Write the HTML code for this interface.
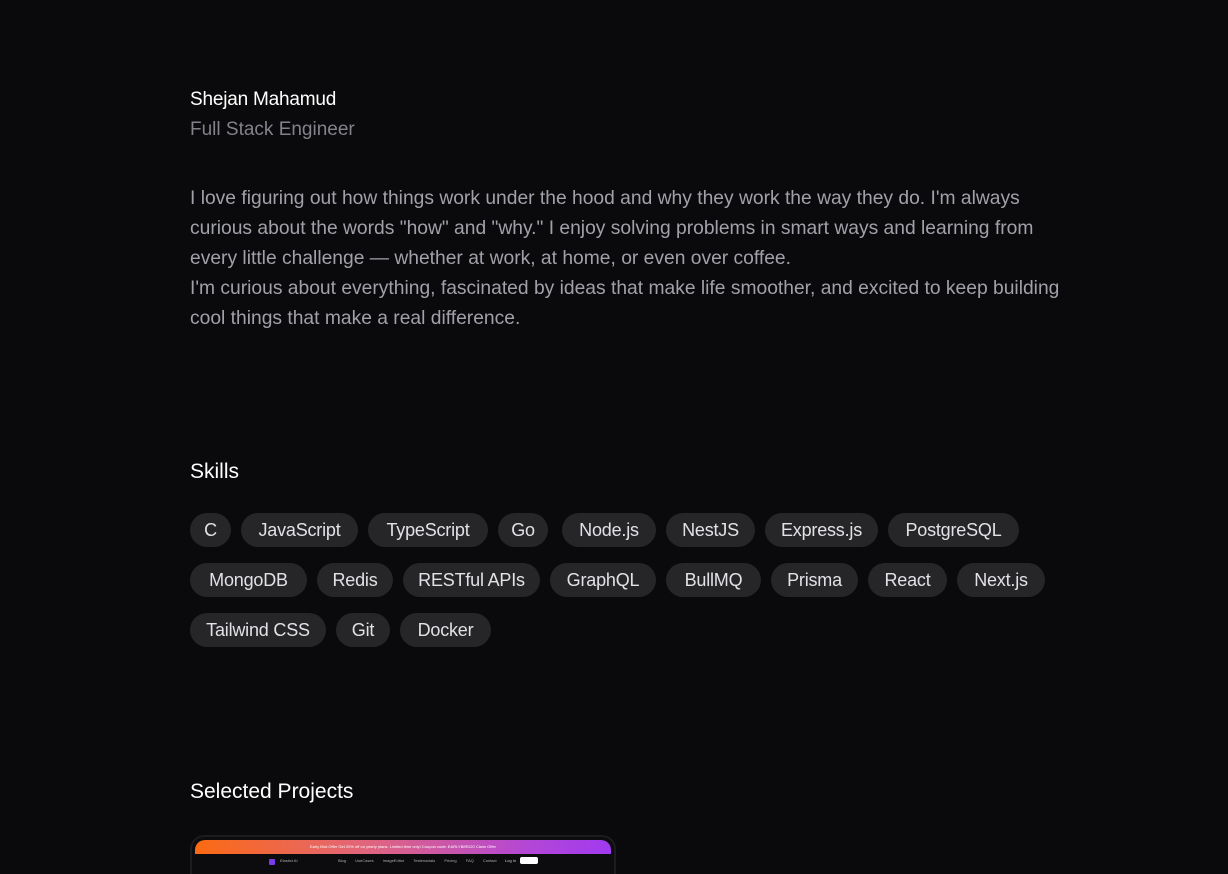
<!DOCTYPE html>
<html style="overflow:hidden;height:874px"><head><meta charset="utf-8"><style>
body{margin:0;background:#0a0a0c;width:1228px;height:874px;overflow:hidden;position:relative;font-family:"Liberation Sans",sans-serif}
.a{position:absolute;white-space:nowrap}
.p{position:absolute;height:34px;line-height:34px;border-radius:17px;background:#262629;color:#e2e2e6;font-size:18px;text-align:center;letter-spacing:-0.2px}
.t{color:#a1a1aa;font-size:18px;font-weight:300}
</style></head><body>
<div class="a" style="left:190px;top:89px;color:#fff;font-size:19px;letter-spacing:-0.2px">Shejan Mahamud</div>
<div class="a t" style="left:190px;top:119px;font-size:19px;color:#82828a">Full Stack Engineer</div>
<div class="a t" style="left:190px;top:184px;line-height:30px;font-size:19.25px">I love figuring out how things work under the hood and why they work the way they do. I'm always<br>curious about the words "how" and "why." I enjoy solving problems in smart ways and learning from<br>every little challenge — whether at work, at home, or even over coffee.<br>I'm curious about everything, fascinated by ideas that make life smoother, and excited to keep building<br>cool things that make a real difference.</div>
<div class="a" style="left:190px;top:460px;color:#fff;font-size:21px">Skills</div>
<div class="p" style="left:190px;top:513px;width:41px">C</div>
<div class="p" style="left:241px;top:513px;width:117px">JavaScript</div>
<div class="p" style="left:368px;top:513px;width:120px">TypeScript</div>
<div class="p" style="left:498px;top:513px;width:50px">Go</div>
<div class="p" style="left:562px;top:513px;width:94px">Node.js</div>
<div class="p" style="left:666px;top:513px;width:89px">NestJS</div>
<div class="p" style="left:765px;top:513px;width:113px">Express.js</div>
<div class="p" style="left:888px;top:513px;width:131px">PostgreSQL</div>
<div class="p" style="left:190px;top:563px;width:117px">MongoDB</div>
<div class="p" style="left:317px;top:563px;width:76px">Redis</div>
<div class="p" style="left:403px;top:563px;width:137px">RESTful APIs</div>
<div class="p" style="left:550px;top:563px;width:106px">GraphQL</div>
<div class="p" style="left:666px;top:563px;width:95px">BullMQ</div>
<div class="p" style="left:771px;top:563px;width:87px">Prisma</div>
<div class="p" style="left:868px;top:563px;width:79px">React</div>
<div class="p" style="left:957px;top:563px;width:88px">Next.js</div>
<div class="p" style="left:190px;top:613px;width:136px">Tailwind CSS</div>
<div class="p" style="left:336px;top:613px;width:54px">Git</div>
<div class="p" style="left:400px;top:613px;width:91px">Docker</div>
<div class="a" style="left:190px;top:780px;color:#fff;font-size:21px">Selected Projects</div>
<div style="position:absolute;left:190px;top:835px;width:422px;height:39px;border:2px solid #1c1c20;border-bottom:0;border-radius:14px 14px 0 0;background:#0c0c0e;overflow:hidden">
<div style="position:absolute;left:3px;top:3px;right:3px;height:14px;border-radius:10px 10px 0 0;background:linear-gradient(90deg,#fb6a12,#e2667a 40%,#b347d6 80%,#a13af0);color:#fff;font-size:4px;line-height:14px;text-align:center">Early Bird Offer Get 20% off on yearly plans. Limited time only! Coupon code: EARLYBIRD20 Claim Offer</div>
<div style="position:absolute;left:77px;top:22px;width:6px;height:6px;background:#7c3aed;border-radius:1px"></div>
<div style="position:absolute;left:88px;top:21px;color:#aaa;font-size:4px">Elastict AI</div>
<div style="position:absolute;left:146px;top:21px;color:#aaa;font-size:4px;word-spacing:8px">Blog UseCases ImageEditor Testimonials Pricing FAQ Contact</div>
<div style="position:absolute;left:313px;top:21px;color:#ccc;font-size:4px">Log In</div>
<div style="position:absolute;left:328px;top:20px;width:18px;height:7px;background:#fff;border-radius:2px"></div>
</div>
</body></html>
